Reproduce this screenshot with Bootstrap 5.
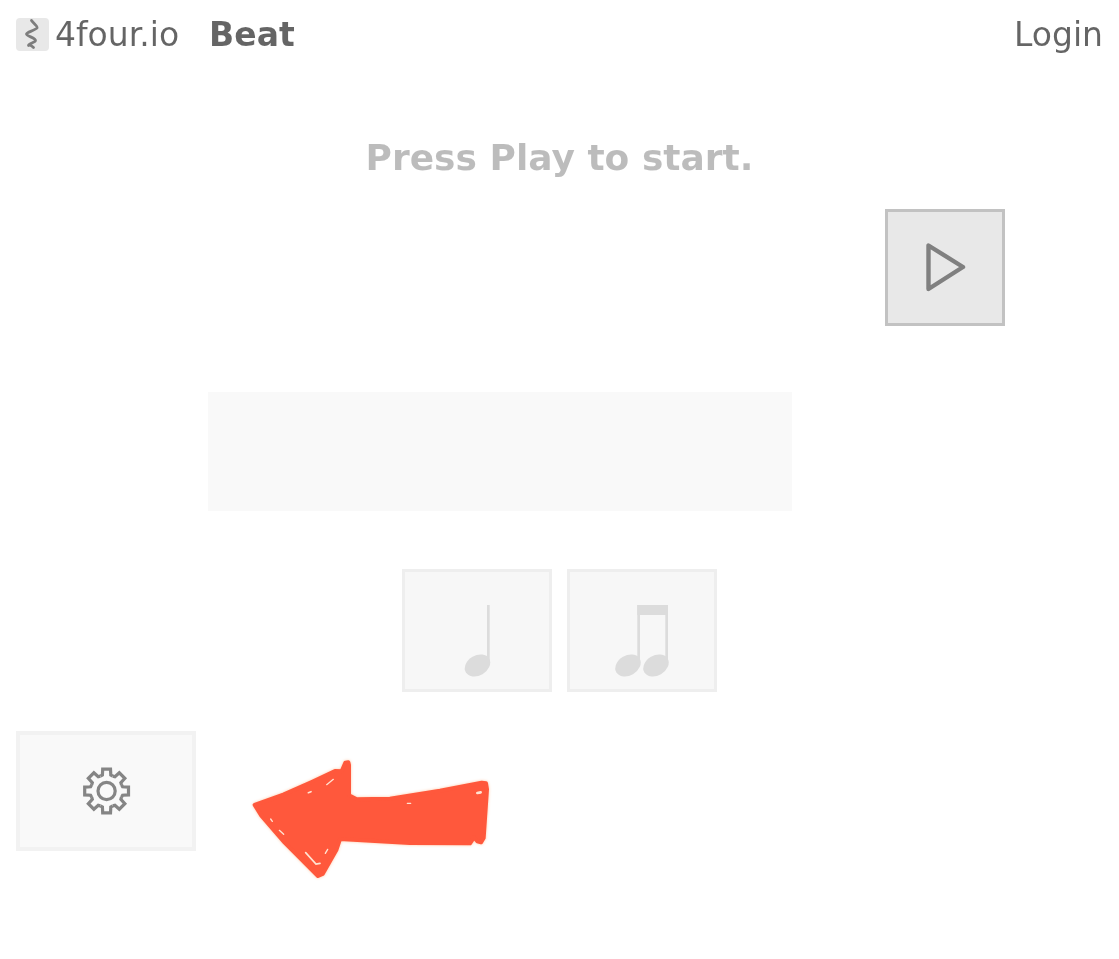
<!DOCTYPE html>
<html lang="en">
<head>
  <meta charset="UTF-8" />
  <meta name="viewport" content="width=device-width, initial-scale=1" />
  <title>Beat - 4four.io</title>
  <link href="https://cdn.jsdelivr.net/npm/bootstrap@5.3.0/dist/css/bootstrap.min.css" rel="stylesheet" />
  <style>
    body {
      background: #fff;
      color: #000;
      font-family: "DejaVu Sans", sans-serif;
    }
    /* Top bar */
    #topBar {
      height: 70px;
      padding: 0 16px;
      font-size: 33px;
      line-height: 38px;
    }
    #topBar a { color: #000; opacity: .6; text-decoration: none; }
    .logo-box {
      width: 33px;
      height: 33px;
      margin-top: -1px;
      background: #e8e8e8;
      border-radius: 4px;
    }
    .brand-name { margin-left: 6px; }
    .page-name { margin-left: 30px; font-weight: 700; }

    #prompt {
      margin: 68px 0 0;
      font-size: 36px;
      line-height: 40px;
      font-weight: 700;
      color: #000;
      opacity: .26;
    }
    .play-row { margin-top: 31px; padding-right: 114px; }
    .play-btn {
      width: 120px;
      height: 117px;
      background: #e8e8e8;
      border: 3px solid #c2c2c2;
    }
    .beat-panel {
      width: 584px;
      height: 119px;
      margin: 66px 0 0 208px;
      background: #f9f9f9;
    }
    .note-row { margin: 58px 0 0 402px; gap: 15px; }
    .note-btn {
      width: 150px;
      height: 122.5px;
      background: #f7f7f7;
      border: 3px solid #eee;
    }
    .settings-row { margin: 39.5px 0 0 16px; }
    .settings-btn {
      width: 180px;
      height: 120px;
      background: #f9f9f9;
      border: 4px solid #f2f2f2;
    }
    .hint-arrow { margin: 19px 0 0 44px; filter: drop-shadow(0 0 1.5px #ffc9a8); }
    .play-btn, .note-btn, .settings-btn { padding: 0; border-radius: 0; }
    .play-btn svg, .note-btn svg, .settings-btn svg { display: block; }
  </style>
</head>
<body>

<nav id="topBar" class="d-flex align-items-center">
  <div class="logo-box d-flex flex-shrink-0">
    <svg width="33" height="33" viewBox="0 0 33 33">
      <path d="M15.5 2.5C17 5 22 8 21 10C19 12.5 10.5 14 10.5 16C10.5 18 19.5 20 19.5 22.5C19.5 24.5 12 25.5 12.5 27.5C14 26.5 16 28 17.5 29.5" fill="none" stroke="#7d7d7d" stroke-width="2.8" stroke-linecap="round" stroke-linejoin="round" />
    </svg>
  </div>
  <a class="brand-name" href="#">4four.io</a>
  <a class="page-name" href="#">Beat</a>
  <a class="ms-auto" href="#">Login</a>
</nav>

<main>
  <h1 id="prompt" class="text-center">Press Play to start.</h1>

  <div class="play-row d-flex justify-content-end">
    <button type="button" class="btn play-btn">
      <svg width="114" height="111" viewBox="0 0 114 111">
        <path d="M40.5 33.5V77L75 55Z" fill="none" stroke="#808080" stroke-width="4.4" stroke-linejoin="round" />
      </svg>
    </button>
  </div>

  <div class="beat-panel"></div>

  <div class="note-row d-flex">
    <button type="button" class="btn note-btn">
      <svg width="144" height="116" viewBox="0 0 144 116" fill="#dcdcdc">
        <ellipse cx="72.5" cy="93.5" rx="13.5" ry="10" transform="rotate(-30 72.5 93.5)" />
        <rect x="82" y="33" width="2.7" height="60" />
      </svg>
    </button>
    <button type="button" class="btn note-btn">
      <svg width="144" height="116" viewBox="0 0 144 116" fill="#dcdcdc">
        <ellipse cx="58" cy="93.5" rx="13.5" ry="10" transform="rotate(-30 58 93.5)" />
        <ellipse cx="86" cy="93.5" rx="13.5" ry="10" transform="rotate(-30 86 93.5)" />
        <rect x="67.3" y="33" width="2.7" height="60" />
        <rect x="95.3" y="33" width="2.7" height="60" />
        <rect x="67.3" y="33" width="30.7" height="10" />
      </svg>
    </button>
  </div>

  <div class="settings-row d-flex align-items-start">
    <button type="button" class="btn settings-btn">
      <svg width="172" height="112" viewBox="-86 -56 172 112" fill="none" stroke="#858585" stroke-width="3.2" stroke-linejoin="miter">
        <defs>
          <path id="gearTooth" d="M14.9-6.17L16-4.2L21.9-3.9V3.9L16 4.2L14.9 6.17" />
        </defs>
        <g transform="translate(.6 0)">
          <use href="#gearTooth" />
          <use href="#gearTooth" transform="rotate(45)" />
          <use href="#gearTooth" transform="rotate(90)" />
          <use href="#gearTooth" transform="rotate(135)" />
          <use href="#gearTooth" transform="rotate(180)" />
          <use href="#gearTooth" transform="rotate(225)" />
          <use href="#gearTooth" transform="rotate(270)" />
          <use href="#gearTooth" transform="rotate(315)" />
          <circle r="8.6" />
        </g>
      </svg>
    </button>
    <svg class="hint-arrow" width="260" height="135" viewBox="0 0 780 405">
      <path fill="#ff583c" stroke="#ff583c" stroke-width="12" stroke-linejoin="round" d="M44 165L130 134L215 96L285 63L305 64L316 38L325 37L327 45L327 136L350 148L450 146L600 122L725 98L738 100L741 118L731 264L723 277L712 274L702 262L690 280L510 279L300 267L289 300L248 372L234 378L134 278L64 197Z" />
      <g fill="none" stroke="#ffe3d2" stroke-width="4" stroke-linecap="round">
        <path d="M197 308L228 342L240 340" stroke-width="5" />
        <path d="M260 104L280 88" />
        <path d="M205 128L213 125" stroke-width="5" />
        <path d="M92 207L97 214" />
        <path d="M118 241L131 253" />
        <path d="M256 310L263 298" />
        <path d="M502 160L512 160" />
        <path d="M712 129L722 127" stroke-width="8" />
      </g>
    </svg>
  </div>
</main>

<script src="https://cdn.jsdelivr.net/npm/bootstrap@5.3.0/dist/js/bootstrap.bundle.min.js"></script>
</body>
</html>
